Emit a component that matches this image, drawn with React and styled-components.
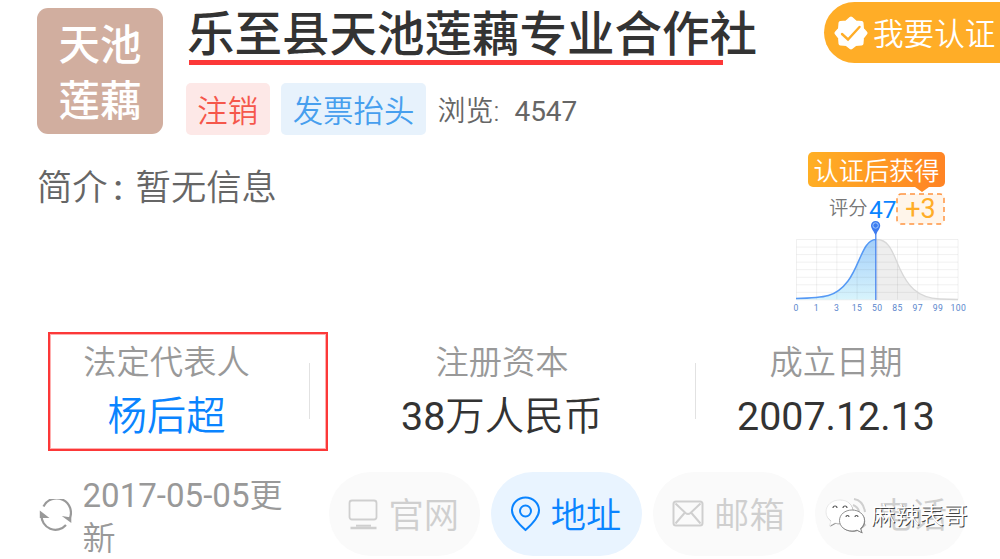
import React from 'react';
import styled, { createGlobalStyle, css } from 'styled-components';

const Colors = {
  primary: '#0a84ff',
  darkText: '#333333',
  midText: '#666666',
  softText: '#999999',
  disabled: '#cfcfcf',
  orange: '#ffad27',
  marker: '#fc3838',
};

const GlobalStyle = createGlobalStyle`
  * {
    box-sizing: border-box;
  }

  body {
    margin: 0;
    background: #fff;
    font-family: Roboto, 'Noto Sans CJK SC', sans-serif;
    font-weight: 350;
    white-space: nowrap;
    overflow: hidden;
  }
`;

const Page = styled.main`
  position: relative;
  width: 1000px;
  height: 559px;
  overflow: hidden;
  display: flex;
  flex-direction: column;
`;

const Digits = styled.span`
  font-weight: 400;
`;

const Header = styled.header`
  display: flex;
  align-items: flex-start;
  height: 144px;
  padding: 0 0 0 37px;
`;

const Logo = styled.div`
  width: 126px;
  height: 126px;
  margin-top: 8px;
  padding-top: 10px;
  border-radius: 11px;
  background: #d1ae9f;
  color: #fff;
  font-size: 41.5px;
  font-weight: 500;
  line-height: 56px;
  text-align: center;
`;

const HeaderBody = styled.div`
  flex: 1;
  margin-left: 23px;
`;

const CompanyName = styled.h1`
  width: max-content;
  height: 66px;
  margin: 0;
  padding-left: 1px;
  color: ${Colors.darkText};
  font-size: 47.5px;
  font-weight: 500;
  line-height: 71px;
`;

const TagRow = styled.div`
  display: flex;
  align-items: center;
  height: 52px;
  margin-top: 17px;
`;

const Tag = styled.span`
  height: 52px;
  width: ${props => props.$width}px;
  margin-right: 11.5px;
  border-radius: 5px;
  background: ${props => props.$background};
  color: ${props => props.$color};
  font-size: 30.4px;
  line-height: 58px;
  text-align: center;
`;

const Views = styled.span`
  display: flex;
  height: 52px;
  color: ${Colors.midText};
  font-size: 28px;
  line-height: 58px;
`;

const ViewsCount = styled(Digits)`
  margin-left: 15px;
`;

const CertifyButton = styled.button`
  display: flex;
  align-items: center;
  width: 176px;
  height: 61px;
  margin-top: 2px;
  padding: 0 0 0 10px;
  border: 0;
  border-radius: 31px 0 0 31px;
  background: ${Colors.orange};
  color: #fff;
  font: 350 30.6px/61px Roboto, 'Noto Sans CJK SC', sans-serif;
  white-space: nowrap;

  svg {
    flex: none;
    margin-right: 5px;
  }
`;

const CertifyLabel = styled.span`
  padding-top: 4px;
`;

const Overview = styled.section`
  display: flex;
  justify-content: space-between;
  height: 189px;
  padding: 0 30px 0 37px;
`;

const Intro = styled.p`
  display: flex;
  margin: 18px 0 0;
  color: ${Colors.midText};
  font-size: 35.3px;
  line-height: 52px;
`;

const Colon = styled.span`
  width: 28px;
  padding-left: 6px;
  font-weight: 500;
`;

const Score = styled.div`
  width: 180px;
  padding-top: 8px;
`;

const ScoreBanner = styled.div`
  position: relative;
  width: 137px;
  height: 35px;
  margin-left: 18px;
  border-radius: 5px;
  background: linear-gradient(100deg, #ffb024, #ff8324);
  color: #fff;
  font-size: 25.2px;
  line-height: 39px;
  text-align: center;

  &::after {
    content: '';
    position: absolute;
    left: 107px;
    top: 35px;
    border: solid transparent;
    border-width: 5px 7px 0;
    border-top-color: #ff8a24;
  }
`;

const ScoreRow = styled.div`
  display: flex;
  height: 32px;
  margin-top: 6px;
  padding-left: 39px;
  line-height: 32px;
`;

const ScoreLabel = styled.span`
  width: 40px;
  color: #777;
  font-size: 19.3px;
  line-height: 32px;
`;

const ScoreValue = styled(Digits)`
  width: 27px;
  color: ${Colors.primary};
  font-size: 24.5px;
  line-height: 33px;
`;

const ScoreBonus = styled(Digits)`
  display: flex;
  justify-content: center;
  position: relative;
  width: 49px;
  height: 32px;
  color: ${Colors.orange};
  font-size: 27px;
  line-height: 32px;

  svg {
    position: absolute;
    inset: 0;
    z-index: -1;
  }
`;

const ChartSvg = styled.svg`
  display: block;
  margin-top: -6px;
`;

const Stats = styled.section`
  display: grid;
  grid-template-columns: 285px 386px 282px;
  height: 139px;
  padding-left: 24px;
`;

const Stat = styled.div`
  position: relative;
  text-align: center;
  padding-top: 5px;

  & + &::before {
    content: '';
    position: absolute;
    left: 0;
    top: 30px;
    width: 1px;
    height: 56px;
    background: #e2e2e2;
  }
`;

const StatLabel = styled.div`
  color: ${Colors.softText};
  font-size: 33.3px;
  line-height: 50px;
`;

const StatValue = styled.div`
  color: ${props => (props.$link ? Colors.primary : Colors.darkText)};
  font-size: 39.4px;
  line-height: 58px;
`;

const Footer = styled.footer`
  display: flex;
  height: 87px;
  padding-left: 39px;
`;

const Updated = styled.div`
  display: flex;
  width: 289.5px;

  svg {
    flex: none;
    margin: 27px 10.5px 0 0;
  }
`;

const UpdatedText = styled.div`
  width: 204px;
  padding-top: 2px;
  color: ${Colors.softText};
  font-size: 33.1px;
  line-height: 43px;
  white-space: normal;
  word-break: break-all;
`;

const Contacts = styled.nav`
  display: flex;
  gap: 11.3px;
`;

const ContactPill = styled.a`
  display: flex;
  align-items: center;
  width: 151px;
  height: 84px;
  padding-left: 19px;
  border-radius: 42px;
  background: #fafafa;
  color: ${Colors.disabled};
  font-size: 35.3px;
  line-height: 84px;

  svg {
    flex: none;
    margin-right: 9px;
  }

  ${props =>
    props.$active &&
    css`
      background: #e9f4ff;
      color: ${Colors.primary};
    `}
`;

const ContactLabel = styled.span`
  padding-top: 3px;
`;

const NameUnderline = styled.div`
  position: absolute;
  left: 189px;
  top: 60px;
  width: 534px;
  height: 5px;
  background: ${Colors.marker};
`;

const Highlight = styled.div`
  position: absolute;
  left: 48px;
  top: 332px;
  width: 280px;
  height: 119px;
  border: 2px solid ${Colors.marker};
  box-shadow: inset 0 0 0 1px rgba(252, 56, 56, 0.4);
`;

const Watermark = styled.div`
  position: absolute;
  left: 825px;
  top: 497px;
  display: flex;
  align-items: center;
  color: #fff;
  font-size: 24.2px;
  line-height: 36px;
  text-shadow: 1px 1px 0.5px #444;

  svg {
    margin-right: 5px;
  }
`;

const WatermarkName = styled.span`
  padding-top: 1px;
`;

const SealIcon = () => (
  <svg width="34" height="34" viewBox="0 0 34 34">
    <path
      fill="#fff"
      stroke="#fff"
      strokeWidth="4"
      strokeLinejoin="round"
      d="M17 2.500l4.500 4 6 .5 .5 6 3.500 4-3.500 4.500-.5 6-6 .5-4.500 3.500-4.500-3.500-6-.5-.5-6L2.500 17 6 13l.5-6 6-.5z"
    />
    <path d="M8 18l6 5.500L25.500 11" fill="none" stroke={Colors.orange} strokeWidth="2.400" strokeLinecap="round" />
  </svg>
);

const RefreshIcon = () => (
  <svg width="33" height="32" viewBox="0 0 33 32" fill="none" stroke={Colors.softText} strokeWidth="2.200">
    <path d="M4.500 7.500A14 14 0 0 1 30.500 20" />
    <path d="M27 26A14 14 0 0 1 2.500 16" />
    <path d="M32.300 24v-5.500l-9.500-1.500zM.8 11.500v7.500h9.700z" fill={Colors.softText} stroke="none" />
  </svg>
);

const MonitorIcon = () => (
  <svg width="32" height="34" viewBox="0 0 32 34" fill="none" stroke="currentColor" strokeWidth="1.800">
    <rect x="1.500" y="3.500" width="27" height="19" rx="2.500" />
    <path d="M8 28.700h15" strokeWidth="2" />
    <path d="M2.500 31h26" strokeWidth="2.500" />
  </svg>
);

const PinIcon = () => (
  <svg width="32" height="36" viewBox="0 0 32 36" fill="none" stroke="currentColor" strokeWidth="2">
    <path d="M15.500 34C11 30 2 22 2 14.500a13.500 13 0 0 1 27 0C29 22 20 30 15.500 34z" />
    <circle cx="15.500" cy="15" r="5.500" />
  </svg>
);

const MailIcon = () => (
  <svg width="33" height="30" viewBox="0 0 33 30" fill="none" stroke="currentColor" strokeWidth="2">
    <rect x="1.500" y="2.500" width="29" height="24" rx="2.500" />
    <path d="M3.500 4.500l10 9.500q2.500 2 5 0l10-9.500M3.500 24.500l9.500-11M28.500 24.500L19 13.500" />
  </svg>
);

const PhoneIcon = () => (
  <svg width="33" height="34" viewBox="0 0 33 34" fill="none" stroke="currentColor" strokeWidth="2">
    <path d="M7 4c-5 5-3 14 4 21s15 8 20 3l-6-6-4 3c-4-2-7-5-8-9l3-4zM20 2c6 1 10 6 11 13M19 8c3 1 6 4 6 7" />
  </svg>
);

const WechatIcon = () => (
  <svg width="41" height="36" viewBox="0 0 41 36">
    <g fill="#888" transform="translate(.7 .8)">
      <path d="M15 2C7 2 1 7 1 14c0 4 2 7 5 9l-1.500 5 5.500-3c8 2 18-2 18-11C28 7 23 2 15 2z" />
      <path d="M27 12c-7 0-12.500 4.500-12.500 10.500S20 33 27 33c2 0 3.500-.3 5-.8l5 2.500-1.500-4.200c2.500-2 4-4.700 4-8C39.500 16.500 34 12 27 12z" />
    </g>
    <g fill="#fff" stroke="#ccc" strokeWidth=".4">
      <path d="M15 2C7 2 1 7 1 14c0 4 2 7 5 9l-1.500 5 5.500-3c8 2 18-2 18-11C28 7 23 2 15 2z" />
      <path
        stroke="#777"
        strokeWidth=".8"
        d="M27 12c-7 0-12.500 4.500-12.500 10.500S20 33 27 33c2 0 3.500-.3 5-.8l5 2.500-1.500-4.200c2.500-2 4-4.700 4-8C39.500 16.500 34 12 27 12z"
      />
    </g>
    <g fill="none" stroke="#555" strokeWidth="1.200">
      <path d="M8 10a2 2 0 0 1 4 0M18 10a2 2 0 0 1 4 0M21 19a1.500 1.500 0 0 1 3 0M30 19a1.500 1.500 0 0 1 3 0" />
    </g>
  </svg>
);

const AXIS_TICKS = [0, 1, 3, 15, 50, 85, 97, 99, 100];

const ScoreChart = () => (
  <ChartSvg width="180" height="96" viewBox="0 0 180 96">
    <defs>
      <linearGradient id="scoreFill" x1="0" y1="0" x2="0" y2="1">
        <stop offset="0" stopColor="#a3cffa" />
        <stop offset="1" stopColor="#d8f4fc" />
      </linearGradient>
    </defs>
    <path d="M86 20.500C100 20 103 35 110 50S126 79 150 80L168 80.500H86z" fill="#eee" />
    <path d="M6 79.500C35 79 46 78 58 62S73 20.500 86 20.500V80.500H6z" fill="url(#scoreFill)" />
    <g stroke="#000" strokeOpacity=".06">
      {AXIS_TICKS.map((tick, i) => (
        <path key={tick} d={`M${6.5 + i * 20.2} 20.500v60`} />
      ))}
      {AXIS_TICKS.map((tick, i) => (
        <path key={tick} d={`M6.500 ${20.5 + i * 7.55}h161.500`} />
      ))}
    </g>
    <path d="M86 20.500C100 20 103 35 110 50S126 79 150 80L168 80.500" fill="none" stroke="#d8d8d8" strokeWidth="1.300" />
    <path d="M6 79.500C35 79 46 78 58 62S73 20.500 86 20.500" fill="none" stroke="#5599f5" strokeWidth="1.500" />
    <path d="M85.800 12v69" stroke="#4a86ee" strokeWidth="1.300" />
    <path d="M81 6.500a4.600 4.600 0 0 1 9.200 0c0 3-3 6-4.600 10C84 12.500 81 9.500 81 6.500z" fill="#3e7bef" />
    <circle cx="85.600" cy="6.500" r="2.700" fill="#3e7bef" stroke="#9cc8ff" />
    <g fill="#5a86cc" fontSize="8.600" fontWeight="400" textAnchor="middle" letterSpacing=".4">
      {AXIS_TICKS.map((tick, i) => (
        <text key={tick} x={6 + i * 20.3} y="92">
          {tick}
        </text>
      ))}
    </g>
  </ChartSvg>
);

const STATS = [
  { label: '法定代表人', value: '杨后超', link: true },
  { label: '注册资本', digits: '38', value: '万人民币' },
  { label: '成立日期', digits: '2007.12.13' },
];

const CONTACTS = [
  { label: '官网', Icon: MonitorIcon },
  { label: '地址', Icon: PinIcon, active: true },
  { label: '邮箱', Icon: MailIcon },
  { label: '电话', Icon: PhoneIcon },
];

export default function App() {
  return (
    <>
      <GlobalStyle />
      <Page>
        <Header>
          <Logo>
            天池
            <br />
            莲藕
          </Logo>
          <HeaderBody>
            <CompanyName>乐至县天池莲藕专业合作社</CompanyName>
            <TagRow>
              <Tag $width={83.5} $background="#fde8e7" $color="#f5574b">
                注销
              </Tag>
              <Tag $width={145} $background="#e7f2fc" $color="#479fee">
                发票抬头
              </Tag>
              <Views>
                浏览:<ViewsCount>4547</ViewsCount>
              </Views>
            </TagRow>
          </HeaderBody>
          <CertifyButton>
            <SealIcon />
            <CertifyLabel>我要认证</CertifyLabel>
          </CertifyButton>
        </Header>
        <Overview>
          <Intro>
            简介<Colon>:</Colon>暂无信息
          </Intro>
          <Score>
            <ScoreBanner>认证后获得</ScoreBanner>
            <ScoreRow>
              <ScoreLabel>评分</ScoreLabel>
              <ScoreValue>47</ScoreValue>
              <ScoreBonus>
                <svg width="49" height="32" viewBox="0 0 49 32">
                  <rect
                    x="1"
                    y="1"
                    width="47"
                    height="30"
                    rx="4"
                    fill="#fff5ea"
                    stroke="#ff9440"
                    strokeWidth="1.500"
                    strokeDasharray="5 4"
                  />
                </svg>
                +3
              </ScoreBonus>
            </ScoreRow>
            <ScoreChart />
          </Score>
        </Overview>
        <Stats>
          {STATS.map(({ label, digits, value, link }) => (
            <Stat key={label}>
              <StatLabel>{label}</StatLabel>
              <StatValue $link={link}>
                {digits && <Digits>{digits}</Digits>}
                {value}
              </StatValue>
            </Stat>
          ))}
        </Stats>
        <Footer>
          <Updated>
            <RefreshIcon />
            <UpdatedText>
              <Digits>2017-05-05</Digits>更新
            </UpdatedText>
          </Updated>
          <Contacts>
            {CONTACTS.map(({ label, Icon, active }) => (
              <ContactPill key={label} $active={active}>
                <Icon />
                <ContactLabel>{label}</ContactLabel>
              </ContactPill>
            ))}
          </Contacts>
        </Footer>
        <NameUnderline />
        <Highlight />
        <Watermark>
          <WechatIcon />
          <WatermarkName>麻辣表哥</WatermarkName>
        </Watermark>
      </Page>
    </>
  );
}
